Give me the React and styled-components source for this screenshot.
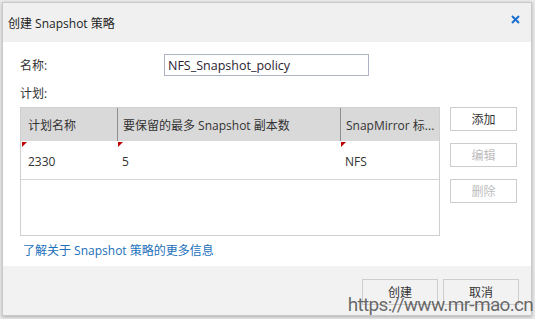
import styled, { createGlobalStyle } from 'styled-components';

const GlobalStyle = createGlobalStyle`
  html, body {
    margin: 0;
    padding: 0;
    background: #e9e9e9;
  }
  body {
    font-family: "Open Sans", "Noto Sans CJK SC", sans-serif;
    font-size: 12px;
    color: #333;
  }
`;

const Page = styled.div`
  width: 535px;
  height: 319px;
  padding: 2px 3px 3px 2px;
  box-sizing: border-box;
  position: relative;
  overflow: hidden;
`;

const Dialog = styled.div`
  height: 100%;
  display: flex;
  flex-direction: column;
  background: #fff;
  border: 1px solid #c9c9c9;
  box-sizing: border-box;
  box-shadow: 0 1px 3px rgba(0, 0, 0, 0.25);
`;

const Header = styled.div`
  height: 39px;
  flex: none;
  display: flex;
  align-items: center;
  justify-content: space-between;
  padding: 0 11px 0 5px;
  background: #f0f0f0;
  font-size: 12px;
  color: #222;
`;

const Close = styled.span`
  width: 9px;
  height: 9px;
  display: flex;
  margin-top: -7px;
`;

const Body = styled.div`
  flex: 1;
  padding: 12px 0 0 17px;
  display: flex;
  flex-direction: column;
`;

const FieldRow = styled.div`
  display: flex;
  align-items: center;
  height: 22px;
`;

const Label = styled.div`
  width: 144px;
  color: #333;
`;

const Input = styled.div`
  width: 200px;
  height: 20px;
  border: 1px solid #aeb3c6;
  display: flex;
  align-items: center;
  padding-left: 3px;
  color: #2b2233;
  font-size: 12.5px;
`;

const PlanLabel = styled.div`
  margin-top: 9px;
  height: 18px;
  line-height: 18px;
`;

const TableArea = styled.div`
  display: flex;
  gap: 10px;
  margin-top: 4px;
`;

const Table = styled.div`
  width: 420px;
  height: 129px;
  border: 1px solid #cfcfcf;
  box-sizing: border-box;
  display: flex;
  flex-direction: column;
`;

const Row = styled.div`
  display: grid;
  grid-template-columns: 96px 223px 1fr;
  height: ${(p) => p.$h}px;
  background: ${(p) => (p.$head ? '#d9d9d9' : '#fff')};
  border-bottom: ${(p) => (p.$head ? 'none' : '1px solid #d6d6d6')};
`;

const Cell = styled.div`
  position: relative;
  display: flex;
  align-items: center;
  padding-left: ${(p) => (p.$first ? 7 : 5)}px;
  padding-top: ${(p) => (p.$head ? 0 : 2)}px;
  border-left: ${(p) => (p.$sep ? '1px solid #8f8f8f' : 'none')};
  white-space: nowrap;
  overflow: hidden;
  color: #333;

  ${(p) =>
    p.$flag &&
    `&::before {
      content: '';
      position: absolute;
      left: 1px;
      top: 1px;
      border-style: solid;
      border-width: 5px 5px 0 0;
      border-color: #c00000 transparent transparent transparent;
    }`}
`;

const SideButtons = styled.div`
  display: flex;
  flex-direction: column;
  gap: 12px;
`;

const Button = styled.div`
  width: 65px;
  height: 22px;
  border: 1px solid #cdcdcd;
  background: #fff;
  display: flex;
  align-items: center;
  justify-content: center;
  color: ${(p) => (p.$disabled ? '#bdbdbd' : '#333')};
`;

const Link = styled.div`
  margin-top: 5px;
  padding-left: 3px;
  color: #1a6fba;
`;

const Footer = styled.div`
  height: 49px;
  flex: none;
  background: #f2f2f2;
  display: flex;
  justify-content: flex-end;
  align-items: flex-start;
  gap: 5px;
  padding: 13px 12px 0 0;
  box-sizing: border-box;
`;

const FooterButton = styled.div`
  width: 74px;
  height: 24px;
  border: 1px solid #cdcdcd;
  display: flex;
  align-items: center;
  justify-content: center;
  color: #333;
`;

const Watermark = styled.div`
  position: absolute;
  right: 2px;
  bottom: 3px;
  font-family: "Roboto", "Liberation Sans", sans-serif;
  font-size: 19px;
  line-height: 22px;
  color: rgba(85, 85, 85, 0.88);
  letter-spacing: -0.7px;
`;

const rows = [{ name: '2330', keep: '5', label: 'NFS' }];

export default function App() {
  return (
    <>
      <GlobalStyle />
      <Page>
        <Dialog>
          <Header>
            <span>创建 Snapshot 策略</span>
            <Close>
              <svg width="9" height="9" viewBox="0 0 9 9">
                <path d="M1 1 L8 8 M8 1 L1 8" stroke="#1a6fd0" strokeWidth="2" />
              </svg>
            </Close>
          </Header>
          <Body>
            <FieldRow>
              <Label>名称:</Label>
              <Input>NFS_Snapshot_policy</Input>
            </FieldRow>
            <PlanLabel>计划:</PlanLabel>
            <TableArea>
              <Table>
                <Row $head $h={33}>
                  <Cell $head $first>计划名称</Cell>
                  <Cell $head $sep>要保留的最多 Snapshot 副本数</Cell>
                  <Cell $head $sep>SnapMirror 标...</Cell>
                </Row>
                {rows.map((r) => (
                  <Row key={r.name} $h={38}>
                    <Cell $first $flag>{r.name}</Cell>
                    <Cell $flag>{r.keep}</Cell>
                    <Cell $flag>{r.label}</Cell>
                  </Row>
                ))}
              </Table>
              <SideButtons>
                <Button>添加</Button>
                <Button $disabled>编辑</Button>
                <Button $disabled>删除</Button>
              </SideButtons>
            </TableArea>
            <Link>了解关于 Snapshot 策略的更多信息</Link>
          </Body>
          <Footer>
            <FooterButton>创建</FooterButton>
            <FooterButton>取消</FooterButton>
          </Footer>
        </Dialog>
        <Watermark>https://www.mr-mao.cn</Watermark>
      </Page>
    </>
  );
}
